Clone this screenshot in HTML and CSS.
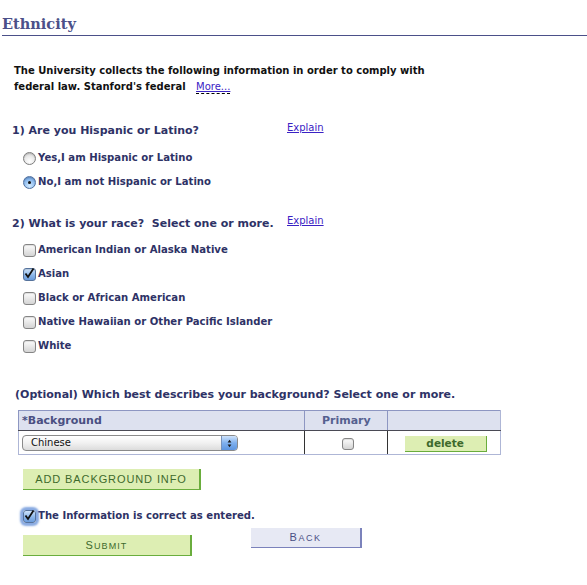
FILE: index.html
```html
<!DOCTYPE html>
<html>
<head>
<meta charset="utf-8">
<title>Ethnicity</title>
<link rel="stylesheet" href="styles.css">
</head>
<body>
<div class="page">
  <h1 class="title">Ethnicity</h1>
  <p class="intro">The University collects the following information in order to comply with<br>federal law. Stanford's federal <a class="more" href="#">More...</a></p>

  <div class="qhead q1"><span class="qtext">1) Are you Hispanic or Latino?</span><a class="explain" href="#">Explain</a></div>
  <div class="opts first">
    <div class="opt"><span class="radio"></span>Yes,I am Hispanic or Latino</div>
    <div class="opt"><span class="radio on"></span>No,I am not Hispanic or Latino</div>
  </div>

  <div class="qhead q2"><span class="qtext">2) What is your race?&nbsp; Select one or more.</span><a class="explain" href="#">Explain</a></div>
  <div class="opts second">
    <div class="opt"><span class="cb"></span>American Indian or Alaska Native</div>
    <div class="opt"><span class="cb on"><svg viewBox="0 0 13 13" width="13" height="13"><path d="M2.5 6.5 L5 10 L10.5 1.5" fill="none" stroke="#111" stroke-width="1.8"/></svg></span>Asian</div>
    <div class="opt"><span class="cb"></span>Black or African American</div>
    <div class="opt"><span class="cb"></span>Native Hawaiian or Other Pacific Islander</div>
    <div class="opt"><span class="cb"></span>White</div>
  </div>

  <p class="optional">(Optional) Which best describes your background? Select one or more.</p>

  <table class="grid">
    <tr>
      <th class="c1">*Background</th>
      <th class="c2">Primary</th>
      <th class="c3"></th>
    </tr>
    <tr>
      <td class="c1">
        <div class="select"><span class="sel-text">Chinese</span><span class="sel-btn"><svg viewBox="0 0 16 15" width="16" height="15"><path d="M8 3.5 L10 6.5 L6 6.5 Z M8 11.5 L10 8.5 L6 8.5 Z" fill="#1a1a1a"/></svg></span></div>
      </td>
      <td class="c2"><span class="cb small"></span></td>
      <td class="c3"><span class="btn-delete">delete</span></td>
    </tr>
  </table>

  <div class="btn-add">ADD BACKGROUND INFO</div>

  <div class="opt confirm"><span class="cb on focus"><svg viewBox="0 0 13 13" width="13" height="13"><path d="M2.5 6.5 L5 10 L10.5 1.5" fill="none" stroke="#111" stroke-width="1.8"/></svg></span>The Information is correct as entered.</div>

  <div class="actions">
    <div class="btn-submit">S<span class="sc">UBMIT</span></div>
    <div class="btn-back">B<span class="sc">ACK</span></div>
  </div>
</div>
</body>
</html>
```

FILE: styles.css
```css
* { box-sizing: border-box; }

body {
  margin: 0;
  background: #ffffff;
  font-family: "DejaVu Sans", Verdana, sans-serif;
  color: #2e3266;
}

.page { width: 587px; }

.title {
  margin: 0 0 0 2px;
  padding: 14px 0 1px;
  font: bold 14.5px/20px "DejaVu Serif", Georgia, serif;
  color: #4b5089;
  border-bottom: 1px solid #4b5089;
}

.intro {
  margin: 27px 0 0;
  padding-left: 14px;
  font: bold 10px/16px "DejaVu Sans", Verdana, sans-serif;
  color: #111111;
}

.more {
  margin-left: 7px;
  font: normal 10px "DejaVu Sans", Verdana, sans-serif;
  color: #3a22c4;
  text-decoration: underline;
  border-bottom: 1px dashed #000000;
  padding-bottom: 1px;
}

.qhead {
  display: flex;
  align-items: flex-start;
  padding-left: 12px;
  line-height: 16px;
}
.q1 { margin-top: 28px; }
.q2 { margin-top: 22px; }

.qtext {
  width: 275px;
  font: bold 11px/16px "DejaVu Sans", Verdana, sans-serif;
  color: #2e3266;
}

.explain {
  font: normal 10px/9px "DejaVu Sans", Verdana, sans-serif;
  color: #3a22c4;
  text-decoration: underline;
}

.opts.first { margin-top: 7px; }
.opts.second { margin-top: 6px; }

.opt {
  display: flex;
  align-items: center;
  gap: 2px;
  height: 24px;
  padding-left: 23px;
  font: bold 10.1px/12px "DejaVu Sans", Verdana, sans-serif;
  color: #2e3266;
}

.radio {
  width: 13px;
  height: 13px;
  border-radius: 50%;
  border: 1px solid #7d7d7d;
  background: radial-gradient(circle at 50% 75%, #ffffff 0%, #e9e9e9 50%, #c9c9c9 100%);
  box-shadow: inset 0 1px 1px rgba(0,0,0,0.15);
  position: relative;
  flex: none;
}
.radio.on {
  border-color: #4f6f9e;
  background: radial-gradient(circle at 50% 80%, #d4ebff 0%, #8fbcee 55%, #5c8fd0 100%);
}
.radio.on::after {
  content: "";
  position: absolute;
  left: 4px;
  top: 4px;
  width: 3px;
  height: 3px;
  border-radius: 50%;
  background: #111;
}

.cb {
  width: 13px;
  height: 13px;
  border-radius: 3px;
  border: 1px solid #858585;
  background: linear-gradient(#fdfdfd, #e4e4e4 60%, #d4d4d4);
  box-shadow: inset 0 1px 1px rgba(0,0,0,0.12);
  position: relative;
  flex: none;
  display: inline-block;
}
.cb svg { position: absolute; left: -1px; top: -2px; }
.cb.on {
  border-color: #56739c;
  background: linear-gradient(#cfe4fb, #8cb7ea 55%, #6a9bdc);
}
.cb.focus {
  box-shadow: 0 0 2px 3px rgba(95, 140, 215, 0.75);
}

.optional {
  margin: 29px 0 0;
  padding-left: 15px;
  font: bold 11px/16px "DejaVu Sans", Verdana, sans-serif;
  color: #2e3266;
}

.grid {
  margin: 7px 0 0 18px;
  width: 483px;
  border-collapse: collapse;
  border: 1px solid #aeb6d6;
}
.grid th {
  height: 20px;
  padding: 0 4px;
  background: #dde1ef;
  border: 1px solid #8d96c2;
  border-bottom: 1px solid #4a4a55;
  font: bold 11px/18px "DejaVu Sans", Verdana, sans-serif;
  color: #4a4f82;
}
.grid th.c1 { text-align: left; padding-left: 3px; width: 287px; }
.grid th.c2 { text-align: center; width: 83px; color: #55608f; }
.grid th.c3 { width: 113px; border-right-color: #aeb6d6; }
.grid td {
  height: 24px;
  padding: 0;
  border-left: 1px solid #333333;
  border-bottom: 1px solid #aeb6d6;
  vertical-align: middle;
}
.grid td.c1 { padding-left: 3px; border-left-color: #aeb6d6; }
.grid td.c2 { text-align: center; }
.grid td.c3 { text-align: center; border-right: 1px solid #aeb6d6; }
.grid td.c2 .cb { vertical-align: middle; margin-left: 4px; width: 12px; height: 12px; }

.select {
  width: 216px;
  height: 16px;
  display: flex;
  border: 1px solid #8a8a8a;
  border-radius: 4px;
  background: linear-gradient(#ffffff, #f1f1f1 50%, #dcdcdc);
  overflow: hidden;
  margin-top: 1px;
}
.sel-text {
  flex: 1;
  padding-left: 8px;
  font: normal 10px/14px "DejaVu Sans", Verdana, sans-serif;
  color: #111;
}
.sel-btn {
  width: 16px;
  flex: none;
  background: linear-gradient(#cfe3fb, #7fb0ee 50%, #5d95e0);
  border-left: 1px solid #7792bb;
  display: flex;
}

.btn-delete {
  display: inline-block;
  width: 82px;
  height: 16px;
  margin-left: 3px;
  background: #ddeeb3;
  border-right: 1px solid #6aad3d;
  border-bottom: 1px solid #6aad3d;
  font: bold 10.5px/15px "DejaVu Sans", Verdana, sans-serif;
  color: #3e6a2c;
  vertical-align: middle;
}

.btn-add {
  margin: 14px 0 0 23px;
  width: 178px;
  height: 21px;
  background: #ddeeb3;
  border-right: 2px solid #6aad3d;
  border-bottom: 1px solid #6aad3d;
  font: normal 11px/20px "Liberation Sans", Arial, sans-serif;
  letter-spacing: 0.9px;
  color: #3e6a2c;
  text-align: center;
}

.opt.confirm { margin-top: 14px; }

.actions {
  display: flex;
  align-items: flex-start;
  padding-left: 23px;
}
.btn-submit {
  margin-top: 7px;
  width: 169px;
  height: 21px;
  background: #ddeeb3;
  border-right: 2px solid #6aad3d;
  border-bottom: 1px solid #6aad3d;
  font: normal 11px/20px "Liberation Sans", Arial, sans-serif;
  letter-spacing: 1.1px;
  color: #3e6a2c;
  text-align: center;
}
.btn-back {
  margin-left: 59px;
  width: 111px;
  height: 20px;
  background: #e7e9f4;
  border-right: 2px solid #7b82bb;
  border-bottom: 1px solid #7b82bb;
  font: normal 11px/19px "Liberation Sans", Arial, sans-serif;
  letter-spacing: 1.5px;
  color: #4a4f85;
  text-align: center;
}
.sc { font-size: 9px; }
```
